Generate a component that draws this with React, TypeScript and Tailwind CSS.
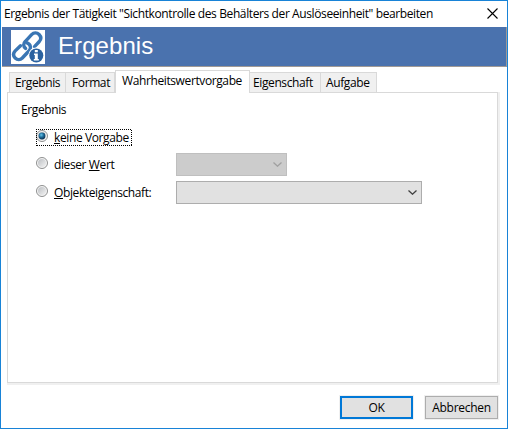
import { ReactNode } from 'react'
import clsx from 'clsx'

interface Tab {
  label: string
  className: string
  active?: boolean
}

const TABS: Tab[] = [
  { label: 'Ergebnis', className: 'w-[57px] pl-[5px]' },
  { label: 'Format', className: 'w-[49px] pl-[6px]' },
  { label: 'Wahrheitswertvorgabe', className: 'w-[135px] pl-[6px]', active: true },
  { label: 'Eigenschaft', className: 'w-[71px] pl-[3px]' },
  { label: 'Aufgabe', className: 'w-[56px] pl-[5px]' },
]

const LinkInfoIcon = () => (
  <svg className="h-[34px] w-[34px] shrink-0 bg-white" viewBox="0 0 34 34" fill="none">
    <g stroke="#3a76b4" strokeWidth="3.4" strokeLinecap="round" strokeLinejoin="round">
      <path d="M14.600 18.400c-2.500-2-2.500-4.800-.2-7.100l6.200-6.600c2.300-2.400 5.300-2.400 7.500-.2 2.200 2.300 2.200 5 0 7.300l-4.600 4.800" />
      <path d="M16.100 12.900c3.800 1.700 4.300 5.400 1.800 8.100l-6.600 7c-2.100 2.100-5 2.100-7.100 0-2.100-2.200-2-5 0-7.100l5.300-5.200" />
    </g>
    <circle cx="25.300" cy="25.500" r="8" fill="#fff" />
    <circle cx="25.300" cy="25.500" r="7" fill="#2b62a0" />
    <path
      d="M23.800 20h3v2.300h-3zM23 23.500h3.800v5.400h1v1.500h-5v-1.500h1v-3.900h-.8z"
      fill="#fff"
    />
  </svg>
)

const Chevron = ({ className }: { className: string }) => (
  <svg className={clsx('h-[5px] w-[9px]', className)} viewBox="0 0 9 5" fill="none">
    <path d="M.5.500l4 3.700 4-3.700" stroke="currentColor" strokeWidth="1.300" />
  </svg>
)

const RadioDot = ({ checked = false }: { checked?: boolean }) => (
  <svg className="h-3 w-3 shrink-0" viewBox="0 0 12 12">
    <defs>
      <linearGradient id="ring" x1="0" y1="0" x2="1" y2="1">
        <stop offset="0" stopColor="#bcbfc3" />
        <stop offset="1" stopColor="#f2f2f2" />
      </linearGradient>
      <radialGradient id="dot" cx=".4" cy=".35" r=".65">
        <stop offset="0" stopColor="#67c5ea" />
        <stop offset=".5" stopColor="#1f6d9b" />
        <stop offset="1" stopColor="#0b2f50" />
      </radialGradient>
    </defs>
    <circle cx="6" cy="6" r="5.500" fill="#f4f4f4" stroke="#8e8f8f" />
    <circle cx="6" cy="6" r="4" fill="url(#ring)" />
    {checked && <circle cx="6" cy="6" r="3.400" fill="url(#dot)" />}
  </svg>
)

// dotted one-pixel keyboard focus frame
const FocusFrame = () => (
  <svg className="absolute -top-px left-0 h-[17px] w-[96px]" viewBox="0 0 96 17" fill="none">
    <path
      d="M0 .5h96M1 16.500h95M.5 0v17M95.500 1v16"
      stroke="#000"
      strokeDasharray="1 1"
      shapeRendering="crispEdges"
    />
  </svg>
)

const Option = ({ checked, children }: { checked?: boolean; children: ReactNode }) => (
  <div className="relative flex h-[18px] items-start gap-[6px]">
    <RadioDot checked={checked} />
    <span className="-mt-px whitespace-nowrap leading-[18px]">{children}</span>
    {checked && <FocusFrame />}
  </div>
)

export default function App() {
  return (
    <div className="flex h-[429px] w-[508px] flex-col overflow-hidden border border-[#1883d7] bg-white font-['Open_Sans',sans-serif] text-[12px] tracking-[-0.39px] text-black">
      <div className="flex h-[26px] items-center justify-between pl-[3px] pr-[9px]">
        <span className="mt-[-1px] whitespace-nowrap">
          Ergebnis der Tätigkeit "Sichtkontrolle des Behälters der Auslöseeinheit" bearbeiten
        </span>
        <svg className="mt-[-2px] h-[11px] w-[11px]" viewBox="0 0 11 11" fill="none">
          <path d="M.5.500l10 10M10.500.500l-10 10" stroke="#000" strokeWidth="1.100" />
        </svg>
      </div>

      <div className="ml-px flex h-10 shrink-0 items-center border-b border-r border-[#a09a96] bg-[#4a72ae] pl-[9px]">
        <LinkInfoIcon />
        <h1 className="ml-[13px] mt-[-2px] font-['Liberation_Sans',sans-serif] text-[24px] leading-[24px] tracking-[0.08px] text-white">
          Ergebnis
        </h1>
      </div>

      <div className="ml-2 mt-[3px] flex h-[22px] shrink-0 items-end">
        {TABS.map(tab => (
          <div
            key={tab.label}
            className={clsx(
              'shrink-0 whitespace-nowrap border-t border-r border-[#d9d9d9] first:border-l',
              tab.className,
              tab.active
                ? 'relative z-10 -mb-px h-[23px] border-l bg-white leading-[19px]'
                : 'h-5 bg-[#f0f0f0] leading-[20px]'
            )}
          >
            {tab.label}
          </div>
        ))}
      </div>

      <div className="ml-[6px] h-[291px] w-[491px] shrink-0 border border-[#d9d9d9] bg-white shadow-[1px_1px_0_1px_#f0f0f0]">
        <div className="ml-[13px] mt-[8px] leading-[18px]">Ergebnis</div>
        <div className="ml-[28px] mt-[11px] flex">
          <div className="flex w-[140px] flex-col gap-[9px]">
            <Option checked>
              <u>k</u>eine Vorgabe
            </Option>
            <Option>
              dieser <u>W</u>ert
            </Option>
            <div className="mt-px">
              <Option>
                <u>O</u>bjekteigenschaft:
              </Option>
            </div>
          </div>
          <div className="mt-[23px] flex flex-col gap-[5px]">
            <div className="flex h-[23px] w-[111px] items-center justify-end border border-[#bfbfbf] bg-[#ccc] pr-1">
              <Chevron className="text-[#a0a0a0]" />
            </div>
            <div className="flex h-[23px] w-[246px] items-center justify-end border border-[#adadad] bg-[#e1e1e1] pr-1">
              <Chevron className="text-[#404040]" />
            </div>
          </div>
        </div>
      </div>

      <div className="mt-[13px] flex shrink-0 justify-end gap-3 pr-[9px]">
        <button className="h-[23px] w-[73px] border-2 border-[#0078d7] bg-[#e1e1e1] leading-[19px] shadow-[0_0_0_1px_#f0f0f0]">
          OK
        </button>
        <button className="h-[23px] w-[73px] border border-[#adadad] bg-[#e1e1e1] leading-[21px] tracking-[-0.3px] shadow-[0_0_0_1px_#f0f0f0]">
          Abbrechen
        </button>
      </div>
    </div>
  )
}
